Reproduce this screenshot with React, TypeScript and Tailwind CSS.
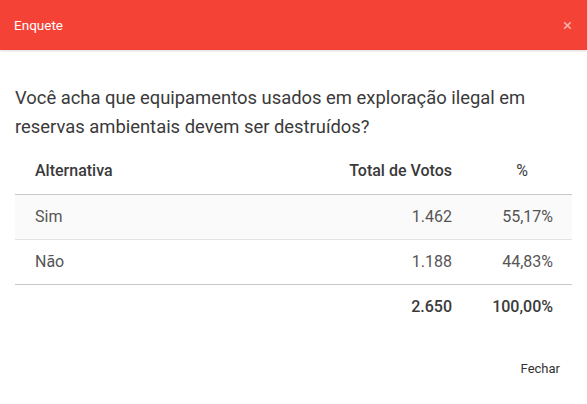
import React from 'react';

const rows = [
  { label: 'Sim', votes: '1.462', pct: '55,17%' },
  { label: 'Não', votes: '1.188', pct: '44,83%' },
];

export default function App() {
  return (
    <div className="w-[587px] h-[404px] bg-white flex flex-col" style={{ fontFamily: 'Roboto, "Noto Sans", sans-serif' }}>
      <div className="h-[50px] bg-[#f44336] flex items-center justify-between pl-[14px] pr-[15px] shadow-[0_1px_2px_rgba(0,0,0,0.15)]">
        <span className="text-white text-[13.5px]">Enquete</span>
        <button className="text-white/60 text-[17px] leading-none">×</button>
      </div>
      <div className="px-[15px] pt-[33px]">
        <p className="text-[18.4px] leading-[29px] text-[#3a3a3a]">
          Você acha que equipamentos usados em exploração ilegal em reservas ambientais devem ser destruídos?
        </p>
        <table className="w-full mt-[8px] text-[16px] border-collapse">
          <thead>
            <tr className="h-[45px] border-b border-[#c8c8c8]">
              <th className="text-left font-medium text-[#3a3a3a] pl-[20px]">Alternativa</th>
              <th className="text-right font-medium text-[#3a3a3a] pr-[20px]">Total de Votos</th>
              <th className="text-center font-normal text-[#3a3a3a] w-[100px]">%</th>
            </tr>
          </thead>
          <tbody>
            {rows.map((r, i) => (
              <tr key={r.label} className={`h-[45px] border-b ${i === 0 ? 'bg-[#fafafa] border-[#e3e3e3]' : 'border-[#c8c8c8]'}`}>
                <td className="text-[#555] pl-[20px]">{r.label}</td>
                <td className="text-right text-[#555] pr-[20px]">{r.votes}</td>
                <td className="text-right text-[#555] pr-[19px]">{r.pct}</td>
              </tr>
            ))}
            <tr className="h-[45px]">
              <td></td>
              <td className="text-right font-medium text-[#3a3a3a] pr-[20px]">2.650</td>
              <td className="text-right font-medium text-[#3a3a3a] pr-[19px]">100,00%</td>
            </tr>
          </tbody>
        </table>
      </div>
      <div className="flex justify-end px-[27px] mt-[30px]">
        <button className="text-[13px] text-[#333]">Fechar</button>
      </div>
    </div>
  );
}
